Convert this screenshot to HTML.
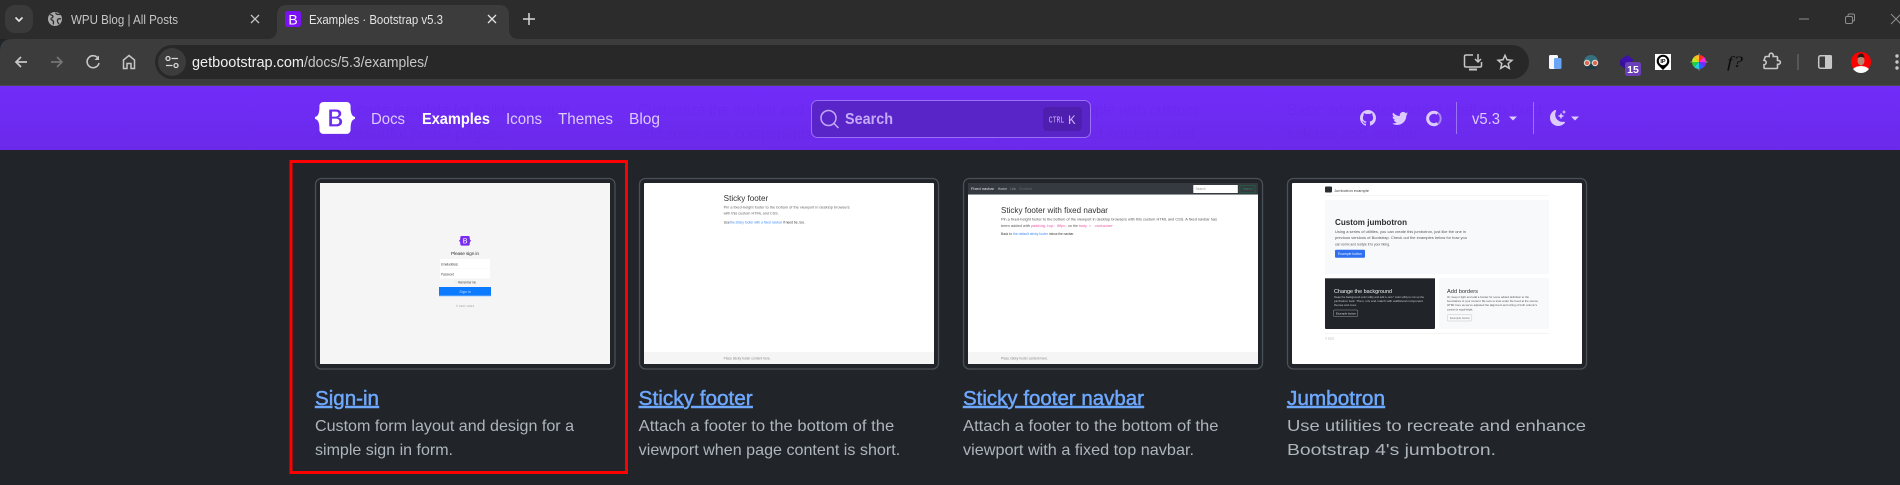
<!DOCTYPE html>
<html lang="en">
<head>
<meta charset="utf-8">
<title>Examples · Bootstrap v5.3</title>
<style>
html,body{margin:0;padding:0;width:1900px;height:485px;overflow:hidden;background:#212529}
svg{display:block}
text{font-family:"Liberation Sans",sans-serif;white-space:pre}
.navl{font-size:16px;fill:#dccbfc}
.title{font-size:20px;font-weight:400;fill:#6ea8fe;text-decoration:underline;stroke:#6ea8fe;stroke-width:.45}
.desc{font-size:16px;fill:#adb5bd}
.ghost{font-size:16px;fill:#5f1fdc;opacity:.2}
.tab{font-size:12.5px}
.th{filter:blur(.32px)}
</style>
</head>
<body>
<svg width="1900" height="485" viewBox="0 0 1900 485" xmlns="http://www.w3.org/2000/svg">
<defs>
<linearGradient id="nav" x1="0" y1="0" x2="0" y2="1"><stop offset="0" stop-color="#712cf9"/><stop offset="1" stop-color="#6b2aea"/></linearGradient>
<path id="bs" fill-rule="evenodd" d="M24.509 0c-6.733 0-11.715 5.893-11.492 12.284.214 6.14-.064 14.092-2.066 20.577C8.943 39.365 5.547 43.485 0 44.014v5.972c5.547.529 8.943 4.649 10.951 11.153 2.002 6.485 2.28 14.437 2.066 20.577C12.794 88.106 17.776 94 24.51 94H93.5c6.733 0 11.714-5.893 11.491-12.284-.214-6.14.064-14.092 2.066-20.577 2.009-6.504 5.396-10.624 10.943-11.153v-5.972c-5.547-.529-8.934-4.649-10.943-11.153-2.002-6.484-2.28-14.437-2.066-20.577C105.214 5.894 100.233 0 93.5 0H24.508zM80 57.863C80 66.663 73.436 72 62.543 72H44a2 2 0 01-2-2V24a2 2 0 012-2h18.437c9.083 0 15.044 4.92 15.044 12.474 0 5.302-4.01 10.049-9.119 10.88v.277C75.317 46.394 80 51.21 80 57.863zM60.521 28.34H49.948v14.934h8.905c6.884 0 10.68-2.772 10.68-7.727 0-4.643-3.264-7.207-8.012-7.207zM49.948 49.2v16.458H60.91c7.167 0 10.964-2.876 10.964-8.281 0-5.406-3.903-8.178-11.425-8.178H49.948z"/>
</defs>

<!-- page -->
<rect width="1900" height="485" fill="#212529"/>

<!-- tab strip -->
<rect width="1900" height="39" fill="#2c2c2c"/>
<rect x="5" y="5" width="28" height="28" rx="10" fill="#3a3a3a"/>
<path d="M15.5 17.5l3.5 3.5 3.5-3.5" fill="none" stroke="#e3e3e3" stroke-width="1.7"/>
<circle cx="55" cy="19" r="7" fill="#a9a9a9"/>
<path d="M50 14.5c2 .5 3 1 3 2.2s-2 1-2 2.3 2.5 1 2.5 3-.5 2.4-.5 2.4M56 12.5c-.5 1.500 1 2 2.500 2s2.800-.5 2.800-.5M61 19c-1.500-.5-3-.5-3.500 1s1 3.500 1.500 4" fill="none" stroke="#2c2c2c" stroke-width="1.300"/>
<text class="tab" x="71" y="24" fill="#c7c7c7" textLength="107" lengthAdjust="spacingAndGlyphs">WPU Blog | All Posts</text>
<path d="M251 15l8 8M259 15l-8 8" stroke="#c7c7c7" stroke-width="1.300" fill="none"/>

<!-- toolbar + active tab -->
<path d="M0 85V51Q0 39 12 39H1900V85Z" fill="#3c3c3c"/>
<path d="M267 39Q277 39 277 29V15Q277 5 287 5H499Q509 5 509 15V29Q509 39 519 39Z" fill="#3c3c3c"/>
<rect x="285" y="11" width="16" height="16" rx="2.500" fill="#7a12f5"/>
<text x="293" y="24.500" font-size="14" fill="#fff" text-anchor="middle">B</text>
<text class="tab" x="309" y="24" fill="#e3e3e3" textLength="134" lengthAdjust="spacingAndGlyphs">Examples · Bootstrap v5.3</text>
<path d="M488 15l8 8M496 15l-8 8" stroke="#e3e3e3" stroke-width="1.300" fill="none"/>
<path d="M529 13v12M523 19h12" stroke="#d8d8d8" stroke-width="1.500" fill="none"/>
<!-- window controls -->
<path d="M1799 19h10" stroke="#8e8e8e" stroke-width="1"/>
<rect x="1845.500" y="16.500" width="7" height="7" rx="1.500" fill="none" stroke="#8e8e8e"/>
<path d="M1848 16v-.5q0-1.500 1.500-1.500h3.500q1.500 0 1.500 1.500v4q0 1.500-1.500 1.500" fill="none" stroke="#8e8e8e"/>
<path d="M1891 14l10 10M1901 14l-10 10" stroke="#8e8e8e" stroke-width="1" fill="none"/>

<!-- nav buttons -->
<path d="M27 62H16M21 57l-5 5 5 5" fill="none" stroke="#c7c7c7" stroke-width="1.700"/>
<path d="M51 62H62M57 57l5 5-5 5" fill="none" stroke="#757575" stroke-width="1.700"/>
<path d="M98.200 58.500A6 6 0 1 0 99 63" fill="none" stroke="#c7c7c7" stroke-width="1.600"/>
<path d="M99 55.500v4.500h-4.500z" fill="#c7c7c7"/>
<path d="M123.500 68.500V60L129 55.500 134.500 60V68.500H131V63.500H127V68.500Z" fill="none" stroke="#c7c7c7" stroke-width="1.500"/>

<!-- omnibox -->
<rect x="155" y="45" width="1374" height="34" rx="17" fill="#282828"/>
<circle cx="172" cy="62" r="14" fill="#3c3c3c"/>
<circle cx="168" cy="58.500" r="2" fill="none" stroke="#d8d8d8" stroke-width="1.300"/>
<path d="M171.500 58.500H178M166 65.500H172.500" stroke="#d8d8d8" stroke-width="1.300"/>
<circle cx="176" cy="65.500" r="2" fill="none" stroke="#d8d8d8" stroke-width="1.300"/>
<text x="192" y="67" font-size="14.500" fill="#f0f0f0" textLength="112" lengthAdjust="spacingAndGlyphs">getbootstrap.com</text>
<text x="304" y="67" font-size="14.500" fill="#c7c7c7" textLength="124" lengthAdjust="spacingAndGlyphs">/docs/5.3/examples/</text>
<!-- install -->
<path d="M1473 55h-7q-1.500 0-1.500 1.500v9q0 1.500 1.500 1.500h14q1.500 0 1.500-1.500V62" fill="none" stroke="#c7c7c7" stroke-width="1.500"/>
<path d="M1469 69.500h8" stroke="#c7c7c7" stroke-width="2"/>
<path d="M1478 54v8M1475 59l3 3 3-3" fill="none" stroke="#c7c7c7" stroke-width="1.500"/>
<!-- star -->
<path d="M1505 55.300l2 4.500 4.900.5-3.700 3.200 1.100 4.800-4.300-2.500-4.300 2.500 1.100-4.800-3.700-3.200 4.900-.5z" fill="none" stroke="#c7c7c7" stroke-width="1.500"/>

<!-- extensions -->
<rect x="1549" y="55" width="9" height="14" rx="1.500" fill="#f4f7fb"/>
<rect x="1554" y="58" width="7.500" height="11" rx="1.500" fill="#6aa5f5"/>
<!-- tanuki -->
<path d="M1584 62a7 7 0 0 1 14 0v3h-14z" fill="#35707f"/>
<rect x="1585.500" y="64" width="11" height="5" rx="1.500" fill="#1e3a44"/>
<circle cx="1587" cy="63" r="2.700" fill="#d9694f" stroke="#e6dfd8" stroke-width="1"/>
<circle cx="1595" cy="63" r="2.700" fill="#d9694f" stroke="#e6dfd8" stroke-width="1"/>
<!-- diamond + badge -->
<path d="M1627 55l7 5-7 5-7-5z" fill="#3f10ab"/>
<path d="M1620 60l7 5v5l-7-5z" fill="#35109a"/>
<rect x="1625" y="62" width="16" height="14" rx="2.500" fill="#6a3fb8"/>
<text x="1633" y="73" font-size="10.500" font-weight="700" fill="#fff" text-anchor="middle">15</text>
<!-- IP pin -->
<rect x="1655" y="54" width="16" height="16" fill="#fff"/>
<path d="M1663 70l-4.500-4.500a6.300 6.300 0 1 1 9 0z" fill="#000"/>
<circle cx="1663" cy="61" r="4.200" fill="#fff"/>
<text x="1663" y="63" font-size="5.500" font-weight="700" fill="#000" text-anchor="middle">IP</text>
<!-- colour wheel -->
<g>
<path d="M1699 62V55A7 7 0 0 1 1704 57Z" fill="#ff2a2a"/>
<path d="M1699 62L1704 57A7 7 0 0 1 1706 62Z" fill="#ff2ad4"/>
<path d="M1699 62H1706A7 7 0 0 1 1704 67Z" fill="#7a2aff"/>
<path d="M1699 62L1704 67A7 7 0 0 1 1699 69Z" fill="#2a60ff"/>
<path d="M1699 62V69A7 7 0 0 1 1694 67Z" fill="#20d0e0"/>
<path d="M1699 62L1694 67A7 7 0 0 1 1692 62Z" fill="#20d040"/>
<path d="M1699 62H1692A7 7 0 0 1 1694 57Z" fill="#c8e820"/>
<path d="M1699 62L1694 57A7 7 0 0 1 1699 55Z" fill="#ffc020"/>
<path d="M1699 53.500v2M1699 68.500v2M1690.500 62h2M1705.500 62h2" stroke="#888" stroke-width="1.200"/>
</g>
<!-- f? -->
<text x="1727" y="67" font-size="16" font-style="italic" fill="#0c0c0c" style="font-family:'Liberation Serif',serif" textLength="16" lengthAdjust="spacingAndGlyphs">f?</text>
<!-- puzzle -->
<path d="M1765 57.500q0-1 1-1h3.200v-1.300a2 2 0 0 1 4 0v1.300h3.300q1 0 1 1v3h1a1.900 1.900 0 0 1 0 3.800h-1v3.200q0 1-1 1h-11.500q-1 0-1-1v-2.800a2.200 2.200 0 0 0 0-4.400z" fill="none" stroke="#c7c7c7" stroke-width="1.600"/>
<path d="M1798 54v16" stroke="#666" stroke-width="1.300"/>
<!-- side panel -->
<rect x="1818.700" y="55.700" width="12.600" height="12.600" rx="1.800" fill="none" stroke="#c7c7c7" stroke-width="1.500"/>
<rect x="1825" y="55" width="7" height="14" rx="1.500" fill="#c7c7c7"/>
<!-- avatar -->
<circle cx="1861" cy="62" r="10" fill="#f00"/>
<path d="M1853 69q3-3 8-3t8 3a10 10 0 0 1-16 0z" fill="#fff"/>
<ellipse cx="1861" cy="60.500" rx="3.500" ry="5" fill="#b98672"/>
<path d="M1857.500 58q.5-4.500 3.500-4.500t3.500 4.500q-3.500-2-7 0z" fill="#2a1a18"/>
<!-- kebab -->
<circle cx="1897" cy="56" r="1.700" fill="#c7c7c7"/><circle cx="1897" cy="62" r="1.700" fill="#c7c7c7"/><circle cx="1897" cy="68" r="1.700" fill="#c7c7c7"/>
<rect y="85" width="1900" height="1" fill="#4a4a4a"/>

<!-- bootstrap navbar -->
<rect y="86" width="1900" height="64" fill="url(#nav)"/>
<g class="ghost">
<text x="315" y="115" textLength="256" lengthAdjust="spacingAndGlyphs">A one-page template for building simple</text>
<text x="315" y="139" textLength="188" lengthAdjust="spacingAndGlyphs">and beautiful home pages.</text>
<text x="638" y="115" textLength="260" lengthAdjust="spacingAndGlyphs">Customize the navbar and carousel, then</text>
<text x="638" y="139" textLength="178" lengthAdjust="spacingAndGlyphs">add some new components.</text>
<text x="963" y="115" textLength="235" lengthAdjust="spacingAndGlyphs">Magazine like example with custom</text>
<text x="963" y="139" textLength="232" lengthAdjust="spacingAndGlyphs">navigation, featured content, and</text>
<text x="1287" y="115" textLength="255" lengthAdjust="spacingAndGlyphs">Basic admin dashboard shell with fixed</text>
<text x="1287" y="139" textLength="135" lengthAdjust="spacingAndGlyphs">sidebar and navbar.</text>
</g>
<use href="#bs" transform="translate(315 102) scale(.339)" fill="#fff"/>
<text class="navl" x="371" y="124" textLength="34" lengthAdjust="spacingAndGlyphs">Docs</text>
<text x="422" y="124" font-size="16" font-weight="700" fill="#fff" textLength="68" lengthAdjust="spacingAndGlyphs">Examples</text>
<text class="navl" x="506" y="124" textLength="36" lengthAdjust="spacingAndGlyphs">Icons</text>
<text class="navl" x="558" y="124" textLength="55" lengthAdjust="spacingAndGlyphs">Themes</text>
<text class="navl" x="629" y="124" textLength="31" lengthAdjust="spacingAndGlyphs">Blog</text>

<!-- search -->
<rect x="811.500" y="100.500" width="279" height="37" rx="6" fill="#5a25c8" stroke="#9a70f5" stroke-width="1"/>
<circle cx="828.500" cy="118" r="7.500" fill="none" stroke="#c3a9f7" stroke-width="1.500"/>
<path d="M834 123.500l4.500 4.500" stroke="#c3a9f7" stroke-width="1.500"/>
<text x="845" y="124" font-size="16" font-weight="700" fill="#c3a9f7" textLength="48" lengthAdjust="spacingAndGlyphs">Search</text>
<rect x="1043" y="107" width="39" height="24" rx="4" fill="#4e1fae"/>
<text x="1048.700" y="122.500" font-size="9" fill="#c9b2f5" style="font-family:'Liberation Mono',monospace" textLength="15.500" lengthAdjust="spacingAndGlyphs">CTRL</text>
<text x="1068" y="124" font-size="13" fill="#c9b2f5" style="font-family:'Liberation Mono',monospace" textLength="7.500" lengthAdjust="spacingAndGlyphs">K</text>

<!-- nav icons -->
<path transform="translate(1360 110)" fill="#dccbfc" d="M8 0C3.580 0 0 3.580 0 8c0 3.540 2.290 6.530 5.470 7.590.4.070.55-.17.55-.38 0-.19-.01-.82-.01-1.490-2.010.37-2.530-.49-2.690-.94-.09-.23-.48-.94-.82-1.130-.28-.15-.68-.52-.01-.53.63-.01 1.080.58 1.230.82.72 1.210 1.870.87 2.330.66.07-.52.28-.87.51-1.070-1.780-.2-3.640-.89-3.640-3.950 0-.87.31-1.590.82-2.150-.08-.2-.36-1.020.08-2.120 0 0 .67-.21 2.200.82.64-.18 1.320-.27 2-.27.68 0 1.360.09 2 .27 1.530-1.040 2.200-.82 2.200-.82.44 1.100.16 1.920.08 2.120.51.56.82 1.270.82 2.150 0 3.070-1.870 3.750-3.650 3.950.29.25.54.73.54 1.480 0 1.070-.01 1.930-.01 2.200 0 .21.15.46.55.38A8.012 8.012 0 0 0 16 8c0-4.420-3.580-8-8-8z"/>
<path transform="translate(1392 110)" fill="#dccbfc" d="M5.026 15c6.038 0 9.341-5.003 9.341-9.334 0-.14 0-.282-.006-.422A6.685 6.685 0 0 0 16 3.542a6.658 6.658 0 0 1-1.889.518 3.301 3.301 0 0 0 1.447-1.817 6.533 6.533 0 0 1-2.087.793A3.286 3.286 0 0 0 7.875 6.030a9.325 9.325 0 0 1-6.767-3.429 3.289 3.289 0 0 0 1.018 4.382A3.323 3.323 0 0 1 .64 6.575v.045a3.288 3.288 0 0 0 2.632 3.218 3.203 3.203 0 0 1-.865.115 3.230 3.230 0 0 1-.614-.057 3.283 3.283 0 0 0 3.067 2.277A6.588 6.588 0 0 1 .78 13.580a6.320 6.320 0 0 1-.78-.045A9.344 9.344 0 0 0 5.026 15z"/>
<path d="M1437.500 113.500a6.200 6.200 0 1 0 0 10" fill="none" stroke="#dccbfc" stroke-width="3"/>
<path d="M1438 113a7 7 0 0 1 0 11" fill="none" stroke="#a887f5" stroke-width="2"/>
<path d="M1456.500 102v32M1533.500 102v32" stroke="#9c73f6" stroke-width="1"/>
<text class="navl" x="1472" y="124" textLength="28" lengthAdjust="spacingAndGlyphs">v5.3</text>
<path d="M1509 116.500h8l-4 4z" fill="#dccbfc"/>
<g transform="translate(1550 110)" fill="#dccbfc">
<path d="M6 .278a.768.768 0 0 1 .08.858 7.208 7.208 0 0 0-.878 3.460c0 4.021 3.278 7.277 7.318 7.277.527 0 1.040-.055 1.533-.16a.787.787 0 0 1 .81.316.733.733 0 0 1-.031.893A8.349 8.349 0 0 1 8.344 16C3.734 16 0 12.286 0 7.710 0 4.266 2.114 1.312 5.124.06A.752.752 0 0 1 6 .278z"/>
<path d="M10.794 3.148a.217.217 0 0 1 .412 0l.387 1.162c.173.518.579.924 1.097 1.097l1.162.387a.217.217 0 0 1 0 .412l-1.162.387a1.734 1.734 0 0 0-1.097 1.097l-.387 1.162a.217.217 0 0 1-.412 0l-.387-1.162A1.734 1.734 0 0 0 9.310 6.593l-1.162-.387a.217.217 0 0 1 0-.412l1.162-.387a1.734 1.734 0 0 0 1.097-1.097l.387-1.162zM13.863.099a.145.145 0 0 1 .274 0l.258.774c.115.346.386.617.732.732l.774.258a.145.145 0 0 1 0 .274l-.774.258a1.156 1.156 0 0 0-.732.732l-.258.774a.145.145 0 0 1-.274 0l-.258-.774a1.156 1.156 0 0 0-.732-.732l-.774-.258a.145.145 0 0 1 0-.274l.774-.258c.346-.115.617-.386.732-.732L13.863.1z"/>
</g>
<path d="M1571 116.500h8l-4 4z" fill="#dccbfc"/>

<!-- red highlight -->
<rect x="291" y="161.500" width="335.500" height="311" fill="none" stroke="#f00" stroke-width="3"/>

<!-- card frames -->
<g fill="none" stroke="#495057" stroke-width="1.300">
<rect x="315.500" y="178.500" width="299.500" height="190.500" rx="6"/>
<rect x="639.500" y="178.500" width="299" height="190.500" rx="6"/>
<rect x="963.500" y="178.500" width="299" height="190.500" rx="6"/>
<rect x="1287.500" y="178.500" width="299" height="190.500" rx="6"/>
</g>

<!-- thumbnail 1 -->
<rect x="320" y="183" width="290" height="181" fill="#f5f5f5"/>
<g class="th">
<use href="#bs" transform="translate(459 236) scale(.102)" fill="#7a2cf0"/>
<text x="465" y="255" font-size="4.800" fill="#333" text-anchor="middle" textLength="28">Please sign in</text>
<rect x="440" y="259" width="50" height="9.500" fill="#fff"/>
<rect x="440" y="269" width="50" height="9.500" fill="#fff"/>
<text x="441" y="265.500" font-size="3.200" fill="#555" textLength="17">Email address</text>
<text x="441" y="275.500" font-size="3.200" fill="#555" textLength="13">Password</text>
<rect x="454.500" y="281" width="2" height="2" fill="#fff" stroke="#ccc" stroke-width=".3"/>
<text x="458" y="283.500" font-size="3.200" fill="#555" textLength="18">Remember me</text>
<rect x="439" y="287" width="52" height="9" fill="#0d7bff"/>
<rect x="439" y="295.500" width="52" height=".8" fill="#7ab8ff"/>
<text x="465" y="293" font-size="3.200" fill="#dbeaff" text-anchor="middle" textLength="11">Sign in</text>
<text x="465" y="307" font-size="2.800" fill="#999" text-anchor="middle" textLength="18">© 2017–2023</text>
</g>

<!-- thumbnail 2 -->
<rect x="644" y="183" width="290" height="181" rx="1" fill="#fff"/>
<rect x="644" y="352" width="290" height="12" fill="#f5f5f5"/>
<g class="th">
<text x="723.700" y="201" font-size="8" fill="#333" textLength="44.500" lengthAdjust="spacingAndGlyphs">Sticky footer</text>
<text x="723.700" y="208.500" font-size="3.600" fill="#666" textLength="126" lengthAdjust="spacingAndGlyphs">Pin a fixed-height footer to the bottom of the viewport in desktop browsers</text>
<text x="723.700" y="214.500" font-size="3.600" fill="#666" textLength="55" lengthAdjust="spacingAndGlyphs">with this custom HTML and CSS.</text>
<text x="723.700" y="223.300" font-size="3.200" fill="#333" textLength="6">Use</text>
<text x="730" y="223.300" font-size="3.200" fill="#3d8bf5" textLength="52" lengthAdjust="spacingAndGlyphs">the sticky footer with a fixed navbar</text>
<text x="783" y="223.300" font-size="3.200" fill="#333" textLength="22" lengthAdjust="spacingAndGlyphs">if need be, too.</text>
<text x="723.700" y="359.500" font-size="3.200" fill="#888" textLength="47" lengthAdjust="spacingAndGlyphs">Place sticky footer content here.</text>
</g>

<!-- thumbnail 3 -->
<rect x="968" y="183" width="290" height="181" rx="1" fill="#fff"/>
<rect x="968" y="183" width="290" height="11" fill="#343a40"/>
<rect x="968" y="194" width="290" height="1" fill="#8f959a"/>
<g class="th">
<text x="971" y="190.200" font-size="3.400" fill="#e6e6e6" textLength="23" lengthAdjust="spacingAndGlyphs">Fixed navbar</text>
<text x="998" y="190.200" font-size="3.200" fill="#d8d8d8" textLength="9">Home</text>
<text x="1010" y="190.200" font-size="3.200" fill="#8d9298" textLength="6">Link</text>
<text x="1019" y="190.200" font-size="3.200" fill="#60666c" textLength="13">Disabled</text>
<rect x="1193.300" y="185" width="44.500" height="8" fill="#fff"/>
<text x="1195.500" y="190.200" font-size="3.200" fill="#999" textLength="10">Search</text>
<rect x="1240" y="185.300" width="15" height="7.500" fill="none" stroke="#1c6a40" stroke-width=".6"/>
<text x="1242.500" y="190.200" font-size="3.200" fill="#2a8a55" textLength="10">Search</text>
<text x="1001" y="213" font-size="8" fill="#333" textLength="107" lengthAdjust="spacingAndGlyphs">Sticky footer with fixed navbar</text>
<text x="1001" y="220.500" font-size="3.600" fill="#555" textLength="216" lengthAdjust="spacingAndGlyphs">Pin a fixed-height footer to the bottom of the viewport in desktop browsers with this custom HTML and CSS. A fixed navbar has</text>
<text x="1001" y="226.800" font-size="3.600" fill="#555" textLength="29" lengthAdjust="spacingAndGlyphs">been added with</text>
<text x="1031" y="226.800" font-size="3.400" fill="#e83e9c" textLength="36" lengthAdjust="spacingAndGlyphs" style="font-family:'Liberation Mono',monospace">padding-top: 60px;</text>
<text x="1068" y="226.800" font-size="3.600" fill="#555" textLength="10">on the</text>
<text x="1079" y="226.800" font-size="3.400" fill="#e83e9c" textLength="34" lengthAdjust="spacingAndGlyphs" style="font-family:'Liberation Mono',monospace">body &gt; .container</text>
<text x="1001" y="235" font-size="3.200" fill="#333" textLength="11">Back to</text>
<text x="1013" y="235" font-size="3.200" fill="#3d8bf5" textLength="35" lengthAdjust="spacingAndGlyphs">the default sticky footer</text>
<text x="1049" y="235" font-size="3.200" fill="#333" textLength="25" lengthAdjust="spacingAndGlyphs">minus the navbar.</text>
</g>
<rect x="968" y="352" width="290" height="12" fill="#f5f5f5"/>
<text class="th" x="1001" y="359.500" font-size="3.200" fill="#888" textLength="47" lengthAdjust="spacingAndGlyphs">Place sticky footer content here.</text>

<!-- thumbnail 4 -->
<rect x="1292" y="183" width="290" height="181" rx="1" fill="#fff"/>
<g class="th">
<rect x="1325" y="186.500" width="7" height="6" rx="1" fill="#2a2d31"/>
<text x="1334" y="192" font-size="4" fill="#444" textLength="35" lengthAdjust="spacingAndGlyphs">Jumbotron example</text>
<rect x="1325" y="195" width="224" height=".6" fill="#eee"/>
<rect x="1325" y="200" width="224" height="74" rx="1" fill="#f8f9fa"/>
<text x="1335" y="225" font-size="8" font-weight="700" fill="#2b2f33" textLength="72" lengthAdjust="spacingAndGlyphs">Custom jumbotron</text>
<text x="1335" y="233" font-size="3.700" fill="#555" textLength="131" lengthAdjust="spacingAndGlyphs">Using a series of utilities, you can create this jumbotron, just like the one in</text>
<text x="1335" y="239.200" font-size="3.700" fill="#555" textLength="132" lengthAdjust="spacingAndGlyphs">previous versions of Bootstrap. Check out the examples below for how you</text>
<text x="1335" y="245.500" font-size="3.700" fill="#555" textLength="55" lengthAdjust="spacingAndGlyphs">can remix and restyle it to your liking.</text>
<rect x="1335" y="249.700" width="30" height="8" rx="1" fill="#2f6ff0"/>
<text x="1338" y="255" font-size="3.400" fill="#e8f0ff" textLength="24" lengthAdjust="spacingAndGlyphs">Example button</text>
<rect x="1325" y="278" width="110" height="51" rx="1" fill="#212529"/>
<rect x="1325" y="278" width="110" height="1" fill="#666"/>
<text x="1334" y="293" font-size="5.300" fill="#f2f2f2" textLength="58" lengthAdjust="spacingAndGlyphs">Change the background</text>
<text x="1334" y="298" font-size="2.800" fill="#c8c8c8" textLength="90" lengthAdjust="spacingAndGlyphs">Swap the background-color utility and add a .text-* color utility to mix up the</text>
<text x="1334" y="302" font-size="2.800" fill="#c8c8c8" textLength="89" lengthAdjust="spacingAndGlyphs">jumbotron look. Then, mix and match with additional component</text>
<text x="1334" y="306.200" font-size="2.800" fill="#c8c8c8" textLength="23" lengthAdjust="spacingAndGlyphs">themes and more.</text>
<rect x="1333.300" y="310" width="24.500" height="6.500" rx="1" fill="none" stroke="#bbb" stroke-width=".4"/>
<text x="1336" y="314.500" font-size="2.800" fill="#ddd" textLength="20" lengthAdjust="spacingAndGlyphs">Example button</text>
<rect x="1439" y="278" width="110" height="51" rx="1" fill="#f8f9fa"/>
<text x="1447" y="293" font-size="5.300" fill="#333" textLength="31" lengthAdjust="spacingAndGlyphs">Add borders</text>
<text x="1447" y="298" font-size="2.800" fill="#555" textLength="82" lengthAdjust="spacingAndGlyphs">Or, keep it light and add a border for some added definition to the</text>
<text x="1447" y="302" font-size="2.800" fill="#555" textLength="91" lengthAdjust="spacingAndGlyphs">boundaries of your content. Be sure to look under the hood at the source</text>
<text x="1447" y="306.200" font-size="2.800" fill="#555" textLength="90" lengthAdjust="spacingAndGlyphs">HTML here as we've adjusted the alignment and sizing of both column's</text>
<text x="1447" y="310.500" font-size="2.800" fill="#555" textLength="26" lengthAdjust="spacingAndGlyphs">content for equal-height.</text>
<rect x="1447.300" y="314.500" width="24.500" height="6.500" rx="1" fill="none" stroke="#bbb" stroke-width=".4"/>
<text x="1450" y="319" font-size="2.800" fill="#777" textLength="20" lengthAdjust="spacingAndGlyphs">Example button</text>
<rect x="1325" y="333.300" width="224" height=".6" fill="#eee"/>
<text x="1325" y="339.500" font-size="2.800" fill="#aaa" textLength="9">© 2023</text>
</g>

<!-- captions -->
<text class="title" x="315" y="405" textLength="64" lengthAdjust="spacingAndGlyphs">Sign-in</text>
<text class="desc" x="315" y="431" textLength="259" lengthAdjust="spacingAndGlyphs">Custom form layout and design for a</text>
<text class="desc" x="315" y="455" textLength="138" lengthAdjust="spacingAndGlyphs">simple sign in form.</text>

<text class="title" x="638.700" y="405" textLength="114" lengthAdjust="spacingAndGlyphs">Sticky footer</text>
<text class="desc" x="638.700" y="431" textLength="255.500" lengthAdjust="spacingAndGlyphs">Attach a footer to the bottom of the</text>
<text class="desc" x="638.700" y="455" textLength="261.500" lengthAdjust="spacingAndGlyphs">viewport when page content is short.</text>

<text class="title" x="963" y="405" textLength="181" lengthAdjust="spacingAndGlyphs">Sticky footer navbar</text>
<text class="desc" x="963" y="431" textLength="255.500" lengthAdjust="spacingAndGlyphs">Attach a footer to the bottom of the</text>
<text class="desc" x="963" y="455" textLength="231" lengthAdjust="spacingAndGlyphs">viewport with a fixed top navbar.</text>

<text class="title" x="1287" y="405" textLength="98" lengthAdjust="spacingAndGlyphs">Jumbotron</text>
<text class="desc" x="1287" y="431" textLength="299" lengthAdjust="spacingAndGlyphs">Use utilities to recreate and enhance</text>
<text class="desc" x="1287" y="455" textLength="209" lengthAdjust="spacingAndGlyphs">Bootstrap 4's jumbotron.</text>
</svg>
</body>
</html>
